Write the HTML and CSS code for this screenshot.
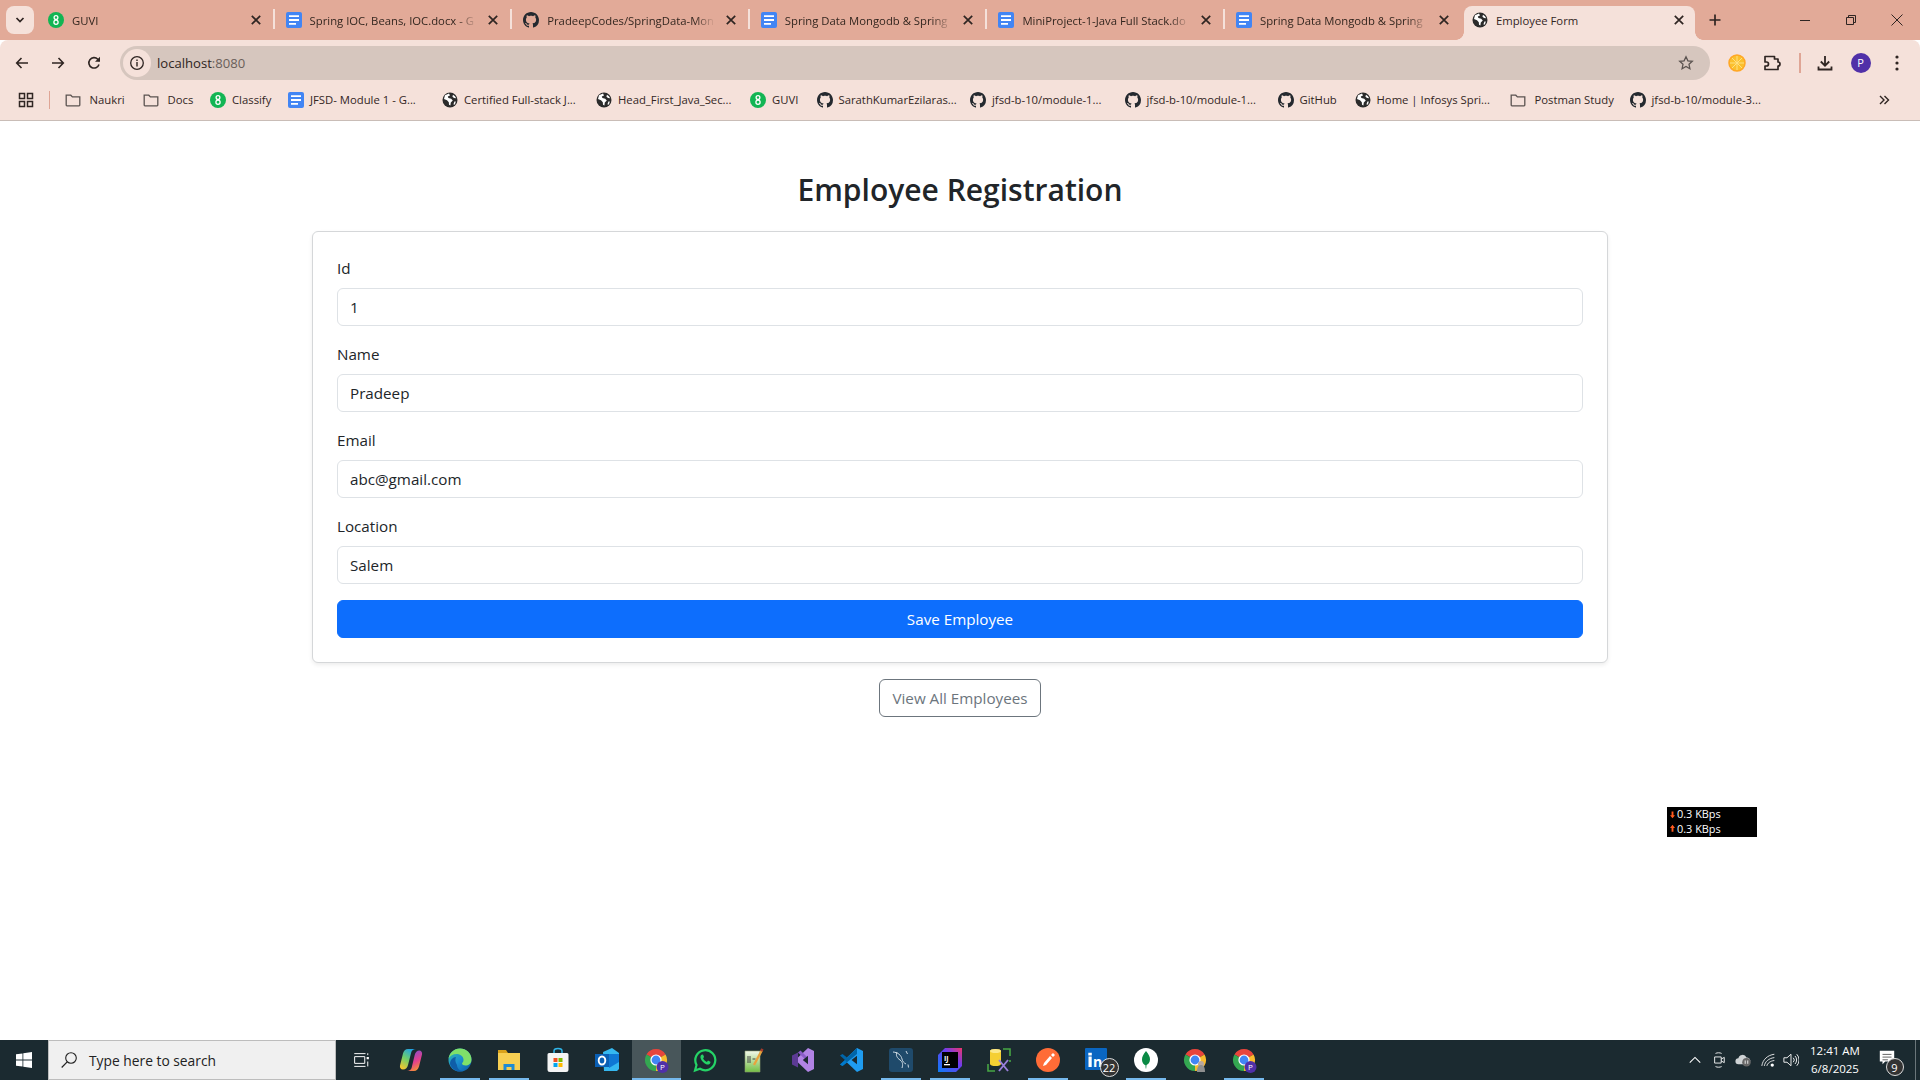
FILE: index.html
```html
<!DOCTYPE html>
<html lang="en">
<head>
<meta charset="utf-8">
<title>Employee Form</title>
<link rel="stylesheet" href="styles.css">
</head>
<body>
<svg class="defs" width="0" height="0" aria-hidden="true">
  <symbol id="docs" viewBox="0 0 16 16"><rect width="16" height="16" rx="2" fill="#4285f4"/><path fill="#fff" d="M3 3.200h10v1.800H3zM3 7.100h10v1.800H3zM3 11h7v1.800H3z"/></symbol>
  <symbol id="guvi" viewBox="0 0 16 16"><circle cx="8" cy="8" r="8" fill="#12b553"/><circle cx="8" cy="5.600" r="1.900" fill="none" stroke="#fff" stroke-width="1.300"/><circle cx="8" cy="10.200" r="2.100" fill="none" stroke="#fff" stroke-width="1.300"/></symbol>
  <symbol id="gh" viewBox="0 0 16 16"><path fill="#24292f" d="M8 0C3.58 0 0 3.58 0 8c0 3.54 2.29 6.53 5.47 7.59.4.07.55-.17.55-.38 0-.19-.01-.82-.01-1.49-2.01.37-2.53-.49-2.69-.94-.09-.23-.48-.94-.82-1.13-.28-.15-.68-.52-.01-.53.63-.01 1.08.58 1.23.82.72 1.21 1.87.87 2.33.66.07-.52.28-.87.51-1.07-1.78-.2-3.64-.89-3.64-3.95 0-.87.31-1.59.82-2.15-.08-.2-.36-1.02.08-2.12 0 0 .67-.21 2.2.82.64-.18 1.32-.27 2-.27.68 0 1.36.09 2 .27 1.53-1.04 2.2-.82 2.2-.82.44 1.1.16 1.92.08 2.12.51.56.82 1.27.82 2.15 0 3.07-1.87 3.75-3.65 3.95.29.25.54.73.54 1.48 0 1.07-.01 1.93-.01 2.2 0 .21.15.46.55.38A8.013 8.013 0 0 0 16 8c0-4.42-3.58-8-8-8z"/></symbol>
  <symbol id="globe" viewBox="0 0 16 16"><circle cx="8" cy="8" r="7.500" fill="#2b2b2b"/><path fill="#fff" d="M7 1.600 3 3.200 2 7l3 1.200 1.800 2 .2 2.600 1.400.6.4-2.800 2-2-1.600-1.800L6.400 6l-.6-1.600L8 3.600zM11 2.800l-.6 1.800 1.600 1.400 2.200.2a6.400 6.400 0 0 0-3.200-3.400zM12.400 9.600l-.9 2.600.7.9a6.400 6.400 0 0 0 1.600-3.600z"/></symbol>
  <symbol id="folder" viewBox="0 0 16 16"><path fill="none" stroke="#5b5350" stroke-width="1.300" d="M1.200 3.200h4.600l1.600 1.700h7.400v8.200a.7.7 0 0 1-.7.7H1.900a.7.7 0 0 1-.7-.7z"/></symbol>
  <symbol id="x" viewBox="0 0 16 16"><path fill="none" stroke="#2f2522" stroke-width="1.700" d="m3.800 3.800 8.400 8.400M12.200 3.800l-8.400 8.400"/></symbol>
  <symbol id="chrome" viewBox="0 0 24 24"><path fill="#e8453c" d="M12 12 2.470 6.500A11 11 0 0 1 21.530 6.500z"/><path fill="#f9bb2d" d="M12 12 21.530 6.500A11 11 0 0 1 12 23z"/><path fill="#34a751" d="M12 12V23A11 11 0 0 1 2.470 6.500z"/><circle cx="12" cy="12" r="5.600" fill="#fff"/><circle cx="12" cy="12" r="4.400" fill="#4286f5"/></symbol>
</svg>

<div class="window">
  <header class="tabstrip">
    <button class="tab-search"><svg width="12" height="12" viewBox="0 0 12 12"><path fill="none" stroke="#2f2522" stroke-width="1.700" d="m2.500 4 3.500 3.600L9.500 4"/></svg></button>
    <div class="tab"><svg class="fav"><use href="#guvi"/></svg><span class="tab-title">GUVI</span><svg class="tab-x"><use href="#x"/></svg></div>
    <div class="tab"><svg class="fav"><use href="#docs"/></svg><span class="tab-title">Spring IOC, Beans, IOC.docx - G</span><svg class="tab-x"><use href="#x"/></svg></div>
    <div class="tab"><svg class="fav"><use href="#gh"/></svg><span class="tab-title">PradeepCodes/SpringData-Mon</span><svg class="tab-x"><use href="#x"/></svg></div>
    <div class="tab"><svg class="fav"><use href="#docs"/></svg><span class="tab-title">Spring Data Mongodb &amp; Spring</span><svg class="tab-x"><use href="#x"/></svg></div>
    <div class="tab"><svg class="fav"><use href="#docs"/></svg><span class="tab-title">MiniProject-1-Java Full Stack.do</span><svg class="tab-x"><use href="#x"/></svg></div>
    <div class="tab last"><svg class="fav"><use href="#docs"/></svg><span class="tab-title">Spring Data Mongodb &amp; Spring</span><svg class="tab-x"><use href="#x"/></svg></div>
    <div class="tab active"><svg class="fav"><use href="#globe"/></svg><span class="tab-title">Employee Form</span><svg class="tab-x"><use href="#x"/></svg></div>
    <svg class="new-tab" viewBox="0 0 16 16"><path fill="none" stroke="#2f2522" stroke-width="1.700" d="M8 2.500v11M2.500 8h11"/></svg>
    <div class="win-controls">
      <svg viewBox="0 0 16 16"><path stroke="#2f2522" d="M3 8.500h10"/></svg>
      <svg viewBox="0 0 16 16"><path fill="none" stroke="#2f2522" d="M3.500 5.500h7v7h-7zM5.500 5.500v-2h7v7h-2"/></svg>
      <svg viewBox="0 0 16 16"><path fill="none" stroke="#2f2522" d="m2.500 2.500 11 11M13.500 2.500l-11 11"/></svg>
    </div>
  </header>

  <div class="toolbar">
    <div class="nav-icons">
      <svg viewBox="0 0 16 16"><path fill="none" stroke="#2f2522" stroke-width="1.600" d="M14 8H3M7.500 3 2.700 8l4.800 5"/></svg>
      <svg viewBox="0 0 16 16"><path fill="none" stroke="#2f2522" stroke-width="1.600" d="M2 8h11M8.500 3l4.800 5-4.800 5"/></svg>
      <svg viewBox="0 0 16 16"><path fill="none" stroke="#2f2522" stroke-width="1.600" d="M13 9.500A5.200 5.200 0 1 1 11.800 4.200L13.500 6"/><path fill="#2f2522" d="M14 1.800v5h-5z"/></svg>
    </div>
    <div class="omnibox">
      <span class="site-info"><svg viewBox="0 0 16 16"><circle cx="8" cy="8" r="6.300" fill="none" stroke="#2f2522" stroke-width="1.300"/><path fill="#2f2522" d="M7.300 7h1.400v4.500H7.300zM7.300 4.500h1.400v1.400H7.300z"/></svg></span>
      <span class="url">localhost<span class="port">:8080</span></span>
      <svg class="star" viewBox="0 0 16 16"><path fill="none" stroke="#5b5350" stroke-width="1.300" d="m8 1.800 1.900 4 4.400.5-3.300 3 .9 4.400L8 11.500l-3.900 2.200.9-4.400-3.300-3 4.400-.5z"/></svg>
    </div>
    <div class="ext-icons">
      <svg class="orange" viewBox="0 0 20 20"><circle cx="10" cy="10" r="8" fill="#fbc02d"/><circle cx="10" cy="10" r="8" fill="none" stroke="#ffa726" stroke-width="1.500"/><path stroke="#ffe082" stroke-width="1" d="M10 3v14M3 10h14M5 5l10 10M15 5 5 15"/></svg>
      <svg class="puzzle" viewBox="0 0 20 20"><path fill="none" stroke="#2f2522" stroke-width="1.700" stroke-linejoin="round" d="M3 3.500h9.500V6H16v3a2 2 0 0 1 0 4v3.500H3V13h1.500a2 2 0 0 0 0-4H3z"/></svg>
      <span class="tool-div"></span>
      <svg class="download" viewBox="0 0 20 20"><path fill="none" stroke="#2f2522" stroke-width="1.800" d="M10 3v9.500M5.800 8.500l4.200 4.200 4.200-4.200M3.500 13.500v3h13v-3"/></svg>
      <span class="avatar">P</span>
      <svg class="dots" viewBox="0 0 20 20"><circle cx="10" cy="4" r="1.600" fill="#2f2522"/><circle cx="10" cy="10" r="1.600" fill="#2f2522"/><circle cx="10" cy="16" r="1.600" fill="#2f2522"/></svg>
    </div>
  </div>

  <nav class="bookmarks">
    <svg class="apps" viewBox="0 0 16 16"><path fill="none" stroke="#2f2522" stroke-width="1.500" d="M1.500 1.500h5v5h-5zM9.500 1.500h5v5h-5zM1.500 9.500h5v5h-5zM9.500 9.500h5v5h-5z"/></svg>
    <span class="bm-div"></span>
    <div class="bm-list">
      <a class="bm dir"><svg><use href="#folder"/></svg>Naukri</a>
      <a class="bm dir"><svg><use href="#folder"/></svg>Docs</a>
      <a class="bm"><svg><use href="#guvi"/></svg>Classify</a>
      <a class="bm"><svg><use href="#docs"/></svg>JFSD- Module 1 - G...</a>
      <a class="bm"><svg><use href="#globe"/></svg>Certified Full-stack J...</a>
      <a class="bm"><svg><use href="#globe"/></svg>Head_First_Java_Sec...</a>
      <a class="bm"><svg><use href="#guvi"/></svg>GUVI</a>
      <a class="bm"><svg><use href="#gh"/></svg>SarathKumarEzilaras...</a>
      <a class="bm"><svg><use href="#gh"/></svg>jfsd-b-10/module-1...</a>
      <a class="bm"><svg><use href="#gh"/></svg>jfsd-b-10/module-1...</a>
      <a class="bm"><svg><use href="#gh"/></svg>GitHub</a>
      <a class="bm"><svg><use href="#globe"/></svg>Home | Infosys Spri...</a>
      <a class="bm dir"><svg><use href="#folder"/></svg>Postman Study</a>
      <a class="bm"><svg><use href="#gh"/></svg>jfsd-b-10/module-3...</a>
    </div>
    <svg class="more" viewBox="0 0 12 12"><path fill="none" stroke="#2f2522" stroke-width="1.400" d="m2 2 4 4-4 4M6.500 2l4 4-4 4"/></svg>
  </nav>

  <main class="page">
    <div class="container">
      <h2 class="title">Employee Registration</h2>
      <form class="card">
        <div class="field"><label class="field-label">Id</label><input class="control" value="1"></div>
        <div class="field"><label class="field-label">Name</label><input class="control" value="Pradeep"></div>
        <div class="field"><label class="field-label">Email</label><input class="control" value="abc@gmail.com"></div>
        <div class="field"><label class="field-label">Location</label><input class="control" value="Salem"></div>
        <button class="btn-save" type="button">Save Employee</button>
      </form>
      <div class="after-card"><a class="btn-outline">View All Employees</a></div>
    </div>
    <div class="netspeed">
      <div class="net-line"><svg class="net-arrow" viewBox="0 0 8 12"><path fill="#ff5a1f" d="M2.500 1h3v6H8l-4 5-4-5h2.500z"/></svg>0.3 KBps</div>
      <div class="net-line"><svg class="net-arrow" viewBox="0 0 8 12"><path fill="#ff5a1f" d="M2.500 11h3V5H8L4 0 0 5h2.500z"/></svg>0.3 KBps</div>
    </div>
  </main>

  <footer class="taskbar">
    <div class="start"><svg viewBox="0 0 16 16"><path fill="#fff" d="M0 2.300 6.500 1.400v6.200H0zM7.300 1.300 16 0v7.600H7.300zM0 8.400h6.500v6.200L0 13.700zM7.300 8.400H16V16l-8.700-1.300z"/></svg></div>
    <div class="searchbox">
      <svg viewBox="0 0 18 18"><circle cx="11" cy="7" r="5.300" fill="none" stroke="#222" stroke-width="1.100"/><path stroke="#222" stroke-width="1.200" d="m7.200 10.800-5.500 5.700"/></svg>
      <span>Type here to search</span>
    </div>
    <div class="task-items">
      <div class="ti view"><svg viewBox="0 0 24 24"><path fill="none" stroke="#fff" stroke-width="1.300" d="M3 3.500h15M3.500 7.500H17v9H3.500zM3 20.500h15M21 3v2.500M21 14v6.500"/><path fill="#fff" d="M19.500 8h3v3h-3z"/></svg></div>
      <div class="ti"><svg viewBox="0 0 24 24"><defs><linearGradient id="copa" x1=".7" y1="0" x2=".2" y2="1"><stop offset="0" stop-color="#1fa2e8"/><stop offset=".5" stop-color="#6fcf6a"/><stop offset="1" stop-color="#f6c62d"/></linearGradient><linearGradient id="copb" x1=".3" y1="0" x2=".7" y2="1"><stop offset="0" stop-color="#7a4fd1"/><stop offset=".55" stop-color="#e5408d"/><stop offset="1" stop-color="#f59a2d"/></linearGradient></defs><path fill="url(#copb)" d="M15 23H8c2.500 0 4.200-1.500 4.700-3.500l3-12.500c.5-2.500 2.500-4.500 4.500-4.500s3.300 2 2.800 4l-3 12c-.7 2.500-2.500 4.500-5 4.500z"/><path fill="url(#copa)" d="M9 1h8c-2.500 0-4.300 1.500-4.800 3.500L9 17c-.5 2.500-2.200 4.500-5 4.500-2.200 0-3.500-2-3-4l3-12C4.500 3 6.500 1 9 1z"/></svg></div>
      <div class="ti on"><svg viewBox="0 0 24 24"><defs><linearGradient id="edg" x1="0" y1="0" x2="1" y2="1"><stop offset="0" stop-color="#35c1a2"/><stop offset=".5" stop-color="#1b8ed0"/><stop offset="1" stop-color="#0c59a4"/></linearGradient></defs><circle cx="12" cy="12" r="11.500" fill="url(#edg)"/><path fill="#7fe06a" d="M12 .5c6 0 11.500 4.500 11.500 11 0 4-3 6-6 6-2 0-3.500-1-3.500-2 0-.7 1.500-1.200 1.500-3.500 0-3.500-3-6-7-6C5 6 2 8 .6 10.500 1.500 5 6 .5 12 .5z"/><path fill="#0f5ea8" d="M9 17c0 3 2.500 6 6 6-5 1.500-11-1-13-7 0-4 3-7 6-7-1 2-1 5 1 8z"/></svg></div>
      <div class="ti on"><svg viewBox="0 0 24 24"><path fill="#d9a21b" d="M1 2h8l2 3H1z"/><path fill="#f7cf52" d="M1 5h22v17H1z"/><path fill="#1f8bd3" d="M6.500 22v-6h11v6h-3v-3h-5v3z"/></svg></div>
      <div class="ti"><svg viewBox="0 0 24 24"><path fill="none" stroke="#2fb6ea" stroke-width="1.500" d="M8 7V3a4 2.500 0 0 1 8 0v4"/><path fill="#f4f4f4" d="M3 5h18a1.500 1.500 0 0 1 1.500 1.500v15A2.500 2.500 0 0 1 20 24H4a2.500 2.500 0 0 1-2.500-2.500v-15A1.500 1.500 0 0 1 3 5z"/><path fill="#f25022" d="M7.500 10h4v4h-4z"/><path fill="#7fba00" d="M12.500 10h4v4h-4z"/><path fill="#00a4ef" d="M7.500 15h4v4h-4z"/><path fill="#ffb900" d="M12.500 15h4v4h-4z"/></svg></div>
      <div class="ti"><svg viewBox="0 0 24 24"><path fill="#35b8f0" d="M8 4 17 0l7 5v16l-2 2H9z"/><path fill="#0f78d4" d="M14 6h10v8l-10 6z"/><path fill="#0a5fb4" d="M0 6h14v13H0z"/><ellipse cx="7" cy="12.500" rx="3.300" ry="4" fill="none" stroke="#fff" stroke-width="1.900"/></svg></div>
      <div class="ti active on"><svg viewBox="0 0 24 24"><use href="#chrome"/><circle cx="18.500" cy="19" r="6" fill="#5030a8"/><text x="18.500" y="22" class="mini-p">P</text></svg></div>
      <div class="ti"><svg viewBox="0 0 24 24"><path fill="none" stroke="#25d366" stroke-width="2.200" d="M2 22.500 3.500 17A10 10 0 1 1 7 20.700z"/><path fill="#25d366" d="M8.500 6.800c-.8.6-1.500 2-.8 3.800 1 2.600 3.300 5 6 5.800 1.600.5 3-.3 3.500-1.200.3-.6.3-1.200.2-1.400l-2.400-1.200-1.100 1.300c-1.700-.6-3.100-2-3.800-3.600l1-1.200-1.100-2.500z"/></svg></div>
      <div class="ti"><svg viewBox="0 0 24 24"><defs><linearGradient id="npd" x1="0" y1="0" x2="0" y2="1"><stop offset="0" stop-color="#f2f7ea"/><stop offset="1" stop-color="#72bf44"/></linearGradient></defs><path fill="url(#npd)" stroke="#8ea06f" stroke-width=".6" d="M3 3h15v21H3z"/><path stroke="#444" d="M6 8v7M8 8v7M10.500 11h3"/><path stroke="#e8a33d" stroke-width="2.400" d="m12 17 8-15"/><path stroke="#a53a2b" stroke-width="2.400" d="m19.300 3.300 1.200-2.400"/></svg></div>
      <div class="ti"><svg viewBox="0 0 24 24"><path fill="#5c3a94" d="M1 7.500 7 4.500v15l-6-3z"/><path fill="#b183e5" d="M17 0l6 3v18l-6 3-10-9.500v-5z"/><path fill="#8a5cc8" d="M7 4.500 17 14V10L9.500 2.500z"/><path fill="#1b2a30" d="M11.800 12 17 7.800v8.400z"/></svg></div>
      <div class="ti"><svg viewBox="0 0 24 24"><path fill="#1f9cf0" d="M17 0l6 3v18l-6 3-10-9.500v-5z"/><path fill="#0065a9" d="M17 0 7 9.500 2.500 6 0 7.500 5 12l-5 4.500L2.500 18 17 6z"/><path fill="#1b2a30" d="M11.500 12 17 7.800v8.400z"/><path fill="#007acc" d="M0 16.500 2.500 18 7 14.500 5 12z"/></svg></div>
      <div class="ti on"><svg viewBox="0 0 24 24"><rect width="24" height="24" rx="3" fill="#1f4a6b"/><path fill="none" stroke="#dfe8ee" stroke-width=".9" d="M4 4c5 .5 8 3 9 7 .5 2.500 2 4 4 5M8 4c-1.500 3 0 6 3 8s3 5 2 8M17 3l1.500 3M19 16.500l.5 3"/></svg></div>
      <div class="ti on"><svg viewBox="0 0 24 24"><defs><linearGradient id="ijg" x1="0" y1="1" x2="1" y2="0"><stop offset="0" stop-color="#0a7df5"/><stop offset=".6" stop-color="#6b3df0"/><stop offset="1" stop-color="#f0346a"/></linearGradient></defs><path fill="url(#ijg)" d="M7 0h17v18l-6 6H0V7z"/><rect x="4" y="4" width="16" height="16" fill="#000"/><text x="6" y="12.500" class="mini-ij">IJ</text><path fill="#fff" d="M6 16h6v1.300H6z"/></svg></div>
      <div class="ti"><svg viewBox="0 0 24 24"><path fill="none" stroke="#47a644" stroke-width="1.600" d="M16 1h7v7M1 16v7h7M23 12v2"/><path fill="#f5cf33" d="M3 3a5.500 2 0 0 1 11 0v13a5.500 2 0 0 1-11 0z"/><path fill="#fbe88a" d="M3 3a5.500 2 0 0 1 11 0 5.500 2 0 0 1-11 0z"/><path fill="none" stroke="#9a7fdb" stroke-width="1.900" d="m12 12 9 11M21 12l-9 11"/></svg></div>
      <div class="ti on"><svg viewBox="0 0 24 24"><circle cx="12" cy="12" r="12" fill="#ff6c37"/><path fill="#fff" d="m7 18 1-3 6-7 2 2-6 7z"/><path fill="#fff" d="m15 7 2-2 2 2-2 2z"/></svg></div>
      <div class="ti"><svg viewBox="0 0 24 24"><rect width="22" height="22" fill="#0a66c2" rx="1"/><path fill="#fff" d="M3.500 8.500h3.200V19H3.500zM3.300 4.800h3.500v2.700H3.300z"/><text x="8" y="19" class="mini-n">n</text></svg><span class="badge">22</span></div>
      <div class="ti on"><svg viewBox="0 0 24 24"><circle cx="12" cy="12" r="12" fill="#fff"/><path fill="#0a8a45" d="M12 3c3 3.500 4 6 4 8.500 0 3-2 5-3.500 5.500l-.3 3.500h-.5l-.3-3.500C10 17 8 14.500 8 11.500 8 9 9 6.500 12 3z"/></svg></div>
      <div class="ti"><svg viewBox="0 0 24 24"><use href="#chrome"/><circle cx="18" cy="16" r="3" fill="#b9a8a0"/><path fill="#8f8f8f" d="M14 24c0-5 1.500-7 4-7s4 2 4 7z"/></svg></div>
      <div class="ti on"><svg viewBox="0 0 24 24"><use href="#chrome"/><circle cx="18.500" cy="19" r="6" fill="#5030a8"/><text x="18.500" y="22" class="mini-p">P</text></svg></div>
    </div>
    <div class="tray">
      <svg class="t-ch" viewBox="0 0 16 16"><path fill="none" stroke="#fff" stroke-width="1.200" d="m2 11 6-6 6 6"/></svg>
      <svg class="t-meet" viewBox="0 0 16 20"><path fill="none" stroke="#fff" d="M3 6.500h7.500v7H3zM10.500 9 14 7v6l-3.500-2M4 2.500c2-1 5-1 7 0M4 17.500c2 1 5 1 7 0"/></svg>
      <svg class="t-cloud" viewBox="0 0 20 18"><path fill="#cfd3d5" d="M4 14a3.500 3.500 0 0 1 0-7 5 5 0 0 1 9.500-1 4 4 0 0 1 4 6l-2 2z"/><circle cx="13.500" cy="11.500" r="5" fill="#666"/><path stroke="#fff" d="M12 9.500v4M15 9.500v4"/></svg>
      <svg class="t-wifi" viewBox="0 0 18 18"><path fill="none" stroke="#fff" stroke-width="1" d="M1 15.500C2 8 8 2.500 16 1.500M4 15.500c.8-5 5-9 12-10M7 15.500c.6-3 4-6 9-6.500"/><circle cx="13.500" cy="14.500" r="2" fill="#fff"/></svg>
      <svg class="t-vol" viewBox="0 0 18 18"><path fill="none" stroke="#fff" d="M1 6.500h3.500L9 2.500v13l-4.500-4H1zM11.500 6.500a3.500 3.500 0 0 1 0 5M13.500 4.500a6.500 6.500 0 0 1 0 9M15.500 2.500a9.500 9.500 0 0 1 0 13"/></svg>
      <div class="clock"><span>12:41 AM</span><span>6/8/2025</span></div>
      <div class="notif"><svg viewBox="0 0 20 20"><path fill="#fff" d="M2 2h16v12H8l-3 3v-3H2z"/><path stroke="#555" d="M5 6h10M5 9h10M5 12h6"/></svg><span class="badge notif-badge">9</span></div>
      <span class="show-desk"></span>
    </div>
  </footer>
</div>
</body>
</html>
```

FILE: styles.css
```css
* { box-sizing: border-box; }
html, body { margin: 0; height: 100%; overflow: hidden; }
body { font-family: "Open Sans", "Noto Sans", sans-serif; color: #212529; background: #fff; }
.defs { position: absolute; }
.window { display: flex; flex-direction: column; height: 1080px; }

/* tab strip */
.tabstrip { height: 40px; flex: none; display: flex; align-items: flex-start; background: #e2aa98; padding-left: 6px; color: #33261f; }
.tab-search { width: 28px; height: 28px; margin-top: 6px; margin-right: 2px; border: 0; padding: 0; border-radius: 8px; background: #f5e1da; display: flex; align-items: center; justify-content: center; }
.tab { width: 237.6px; height: 34px; margin-top: 6px; padding: 0 10px 6px 12px; display: flex; align-items: center; flex: none; position: relative; font-size: 11.3px; }
.tab:not(.active):not(.last)::after { content: ""; position: absolute; right: -1px; top: 3px; width: 2px; height: 20px; background: #f5e1da; }
.tab .fav { width: 16px; height: 16px; flex: none; margin-right: 8px; }
.tab-title { flex: 1; min-width: 0; white-space: nowrap; overflow: hidden; margin-top: 1px; -webkit-mask-image: linear-gradient(90deg, #000 88%, transparent 100%); mask-image: linear-gradient(90deg, #000 88%, transparent 100%); }
.tab-x { width: 16px; height: 16px; flex: none; margin-left: 8px; }
.tab.active { width: 231px; margin-left: 2.400px; background: #f5e1da; border-radius: 8px 8px 0 0; padding: 0 8px 6px 8px; }
.tab.active::before, .tab.active::after { content: ""; position: absolute; bottom: 0; width: 8px; height: 8px; }
.tab.active::before { left: -8px; background: radial-gradient(circle at 0 0, #e2aa98 7.500px, #f5e1da 8px); }
.tab.active::after { right: -8px; background: radial-gradient(circle at 100% 0, #e2aa98 7.500px, #f5e1da 8px); }
.tab.active .tab-title { -webkit-mask-image: none; mask-image: none; }
.new-tab { width: 16px; height: 16px; margin: 12px 0 0 12px; flex: none; }
.win-controls { margin-left: auto; display: flex; }
.win-controls svg { width: 16px; height: 16px; margin: 12px 14px 0 16px; }
.win-controls svg:last-child { margin: 12px 15px 0 16px; }

/* toolbar */
.toolbar { height: 41px; flex: none; display: flex; align-items: center; background: #f5e1da; border-radius: 8px 8px 0 0; padding: 4px 0 0 14px; }
.nav-icons { display: flex; gap: 20px; margin-right: 18px; }
.nav-icons svg { width: 16px; height: 16px; display: block; }
.omnibox { width: 1590px; height: 34px; margin-top: 1px; border-radius: 17px; background: #d6c6be; display: flex; align-items: center; padding: 0 16px 0 3px; }
.site-info { width: 28px; height: 28px; border-radius: 50%; background: #f5e1da; display: flex; align-items: center; justify-content: center; flex: none; }
.site-info svg { width: 16px; height: 16px; }
.url { margin-left: 6px; font-size: 13.100px; color: #2f2522; }
.port { color: #6a5f5a; }
.star { width: 16px; height: 16px; margin-left: auto; }
.ext-icons { display: flex; align-items: center; flex: 1; padding-left: 17px; }
.orange { width: 20px; height: 20px; }
.puzzle { width: 20px; height: 20px; margin-left: 15px; }
.tool-div { width: 1.500px; height: 20px; background: #dfa595; margin-left: 17px; }
.download { width: 20px; height: 20px; margin-left: 14px; }
.avatar { width: 20px; height: 20px; margin-left: 16px; border-radius: 50%; background: #5030a8; color: #fff; font-size: 11px; display: flex; align-items: center; justify-content: center; }
.dots { width: 20px; height: 20px; margin-left: 16px; }

/* bookmarks */
.bookmarks { height: 40px; flex: none; display: flex; align-items: center; background: #f5e1da; border-bottom: 1px solid #c9bdb7; padding: 0 0 2px 18px; font-size: 11.300px; color: #33261f; }
.apps { width: 16px; height: 16px; flex: none; }
.bm-div { width: 1.500px; height: 18px; background: #dfa595; margin: 0 15px 0 14.500px; flex: none; }
.bm-list { display: grid; grid-template-columns: 78px 67px 78px 154px 154px 154px 66.500px 153.500px 154.500px 153px 77px 155.500px 119.500px 140px; flex: none; }
.bm { display: flex; align-items: center; white-space: nowrap; }
.bm svg { width: 16px; height: 16px; margin-right: 6px; flex: none; }
.bm.dir svg { margin-right: 8.500px; }
.more { width: 12px; height: 12px; margin-left: auto; margin-right: 30px; flex: none; }

/* page */
.page { flex: 1; background: #fff; position: relative; }
.container { width: 1320px; margin: 0 auto; padding: 0 12px; }
.title { margin: 50px 0 22px; padding: 0; font-size: 30px; line-height: 38.400px; font-weight: 600; text-align: center; color: #212529; }
.card { border: 1px solid #d5d7d9; border-radius: 6px; padding: 24px; background: #fff; box-shadow: 0 2px 4px rgba(0,0,0,.075); }
.field { margin-bottom: 16px; }
.field-label { display: block; font-size: 15.200px; line-height: 24px; margin-bottom: 8px; color: #212529; }
.control { display: block; width: 100%; height: 38px; padding: 6px 12px; border: 1px solid #dee2e6; border-radius: 6px; font: inherit; font-size: 15.200px; color: #212529; background: #fff; }
.btn-save { display: block; width: 100%; height: 38px; border: 1px solid #0d6efd; border-radius: 6px; background: #0d6efd; color: #fff; font: inherit; font-size: 15.200px; }
.after-card { margin-top: 16px; text-align: center; }
.btn-outline { display: inline-block; height: 38px; line-height: 36px; padding: 0 12px; border: 1px solid #6c757d; border-radius: 6px; color: #6c757d; font-size: 15.200px; }
.netspeed { position: absolute; left: 1667px; top: 686px; width: 90px; height: 30px; background: #000; color: #fff; font-size: 10.900px; padding: 0 0 1px 3px; display: flex; flex-direction: column; justify-content: space-around; }
.net-line { display: flex; align-items: center; line-height: 14px; white-space: nowrap; }
.net-arrow { width: 5px; height: 9px; margin-right: 2px; flex: none; }

/* taskbar */
.taskbar { height: 40px; flex: none; display: flex; background: #1b2a30; color: #fff; }
.start { width: 48px; display: flex; align-items: center; justify-content: center; flex: none; }
.start svg { width: 16px; height: 16px; }
.searchbox { width: 288px; flex: none; background: #f0f0f0; border: 1px solid #bdbdbd; display: flex; align-items: center; padding-left: 11px; color: #222; font-size: 13.800px; }
.searchbox svg { width: 18px; height: 18px; margin-right: 11px; }
.task-items { display: flex; flex: none; }
.ti { width: 49px; display: flex; align-items: center; justify-content: center; position: relative; }
.ti > svg { width: 24px; height: 24px; overflow: visible; }
.ti.view { width: 50.500px; padding-right: 1.500px; }
.ti.view > svg { width: 18px; height: 18px; }
.ti.on::after { content: ""; position: absolute; left: 4.500px; right: 4.500px; bottom: 0; height: 2px; background: #76b9ed; }
.ti.active { background: #48565a; }
.ti.active::after { left: 0; right: 0; }
.mini-p { font-size: 8px; fill: #fff; text-anchor: middle; }
.mini-ij { font-size: 7px; fill: #fff; font-weight: 700; }
.mini-n { font-size: 14px; fill: #fff; font-weight: 700; }
.badge { position: absolute; left: 27px; top: 18px; width: 19px; height: 19px; border-radius: 50%; background: #333; border: 1px solid #ddd; font-size: 11px; display: flex; align-items: center; justify-content: center; color: #fff; }
.tray { margin-left: auto; display: flex; align-items: center; position: relative; height: 100%; }
.tray svg { flex: none; }
.t-ch { width: 14px; height: 14px; margin-right: 10px; }
.t-meet { width: 14px; height: 18px; margin-right: 8.500px; }
.t-cloud { width: 17px; height: 16px; margin-right: 9px; }
.t-wifi { width: 15px; height: 15px; margin-right: 7.500px; }
.t-vol { width: 16px; height: 16px; }
.clock { width: 72px; display: flex; flex-direction: column; align-items: center; font-size: 11.500px; line-height: 18px; }
.notif { width: 32px; height: 100%; position: relative; margin-right: 12px; display: flex; align-items: center; justify-content: center; }
.notif svg { width: 18px; height: 18px; margin-top: -4px; }
.notif-badge { left: 14.500px; top: 18px; width: 18px; height: 18px; font-size: 11px; }
.show-desk { width: 5px; height: 100%; border-left: 1px solid #6b767a; }
```
